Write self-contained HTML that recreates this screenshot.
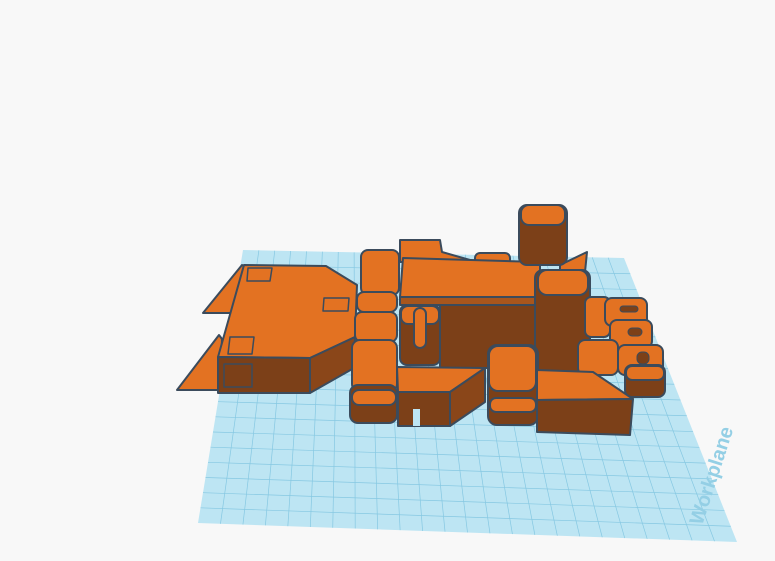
<!DOCTYPE html>
<html><head><meta charset="utf-8"><style>
html,body{margin:0;padding:0;background:#f8f8f8;width:775px;height:561px;overflow:hidden}
svg{display:block}
</style></head><body>
<svg id="s" width="775" height="561" viewBox="0 0 775 561" xmlns="http://www.w3.org/2000/svg">
<rect width="775" height="561" fill="#f8f8f8"/>
<polygon points="243,250 624,258 737,542 198,523" fill="#bde5f3"/>
<g id="grid" stroke="#86c8e2" stroke-width="0.7"></g>
<text x="0" y="0" transform="translate(702,526) rotate(-72)" font-family="Liberation Sans, sans-serif" font-weight="bold" font-size="20" fill="#94cfe5">Workplane</text>
<g stroke="#3b4b5c" stroke-width="2" stroke-linejoin="round">
<polygon points="203,313 242,265 247,268 231,313" fill="#e37222"/>
<polygon points="231,313 247,268 247,313" fill="#7c4018"/>
<polygon points="177,390 219,335 222,339 220,390" fill="#e37222"/>
<polygon points="244,265 326,266 357,285 355,337 310,358 218,357" fill="#e37222"/>
<polygon points="218,357 310,358 310,393 218,393" fill="#7c4018"/>
<polygon points="310,358 355,337 354,368 310,393" fill="#8a4619"/>
<polygon points="248,268 272,268 270,281 247,281" fill="none" stroke-width="1.5"/>
<polygon points="324,298 349,298 348,311 323,311" fill="none" stroke-width="1.5"/>
<polygon points="230,337 254,337 252,354 228,354" fill="none" stroke-width="1.5"/>
<polygon points="224,364 252,364 252,387 224,387" fill="none" stroke-width="1.5"/>
<polygon points="400,240 440,240 442,252 470,260 400,262" fill="#e37222"/>
<rect x="475" y="253" width="35" height="12" rx="5" fill="#e37222"/>
<polygon points="560,265 587,252 585,272 560,275" fill="#e37222"/>
<polygon points="403,258 540,262 540,300 400,297" fill="#e37222"/>
<rect x="440" y="300" width="100" height="68" fill="#7c4018"/>
<rect x="400" y="297" width="140" height="8" fill="#a8561d"/>
<rect x="519" y="205" width="48" height="60" rx="8" fill="#7c4018"/>
<rect x="521" y="205" width="44" height="20" rx="8" fill="#e37222"/>
<rect x="535" y="270" width="55" height="102" rx="8" fill="#7c4018"/>
<rect x="538" y="270" width="50" height="25" rx="9" fill="#e37222"/>
<rect x="361" y="250" width="38" height="45" rx="7" fill="#e37222"/>
<rect x="357" y="292" width="40" height="20" rx="7" fill="#e37222"/>
<rect x="355" y="312" width="42" height="30" rx="7" fill="#e37222"/>
<rect x="352" y="340" width="45" height="52" rx="8" fill="#e37222"/>
<rect x="350" y="385" width="47" height="38" rx="8" fill="#7c4018"/>
<rect x="352" y="390" width="44" height="15" rx="7" fill="#e37222"/>
<rect x="400" y="305" width="40" height="60" rx="7" fill="#7c4018"/>
<rect x="401" y="306" width="38" height="18" rx="7" fill="#e37222"/>
<rect x="414" y="308" width="12" height="40" rx="6" fill="#e37222"/>
<polygon points="397,367 485,368 450,392 398,392" fill="#e37222"/>
<polygon points="398,392 450,392 450,426 398,426" fill="#7c4018"/>
<polygon points="450,392 485,368 485,402 450,426" fill="#8a4619"/>
<rect x="413" y="409" width="7" height="17" fill="#bde5f3" stroke="none"/>
<rect x="488" y="345" width="50" height="80" rx="9" fill="#7c4018"/>
<rect x="489" y="346" width="47" height="45" rx="9" fill="#e37222"/>
<rect x="490" y="398" width="46" height="14" rx="6" fill="#e37222"/>
<rect x="585" y="297" width="25" height="40" rx="6" fill="#e37222"/>
<rect x="605" y="298" width="42" height="28" rx="7" fill="#e37222"/>
<rect x="610" y="320" width="42" height="28" rx="7" fill="#e37222"/>
<rect x="578" y="340" width="40" height="35" rx="7" fill="#e37222"/>
<rect x="618" y="345" width="45" height="30" rx="7" fill="#e37222"/>
<rect x="625" y="365" width="40" height="32" rx="7" fill="#7c4018"/>
<rect x="626" y="366" width="38" height="14" rx="6" fill="#e37222"/>
<rect x="620" y="306" width="18" height="6" rx="3" fill="#7c4018" stroke-width="1"/>
<rect x="628" y="328" width="14" height="8" rx="4" fill="#7c4018" stroke-width="1"/>
<rect x="637" y="352" width="12" height="12" rx="5" fill="#7c4018" stroke-width="1"/>
<polygon points="537,370 593,372 633,399 537,400" fill="#e37222"/>
<polygon points="537,400 633,399 630,435 537,432" fill="#7c4018"/>
</g>
</svg>
<script>
var g=document.getElementById('grid');
function L(a,b,t){return [a[0]+(b[0]-a[0])*t,a[1]+(b[1]-a[1])*t];}
var TL=[243,250],TR=[624,258],BR=[737,542],BL=[198,523];
var s='';
for(var i=1;i<24;i++){var t=i/24;var p=L(TL,TR,t),q=L(BL,BR,t);s+='<line x1="'+p[0]+'" y1="'+p[1]+'" x2="'+q[0]+'" y2="'+q[1]+'"/>';}
for(var i=1;i<18;i++){var t=i/18;var p=L(TL,BL,t),q=L(TR,BR,t);s+='<line x1="'+p[0]+'" y1="'+p[1]+'" x2="'+q[0]+'" y2="'+q[1]+'"/>';}
g.innerHTML=s;
</script>
</body></html>
